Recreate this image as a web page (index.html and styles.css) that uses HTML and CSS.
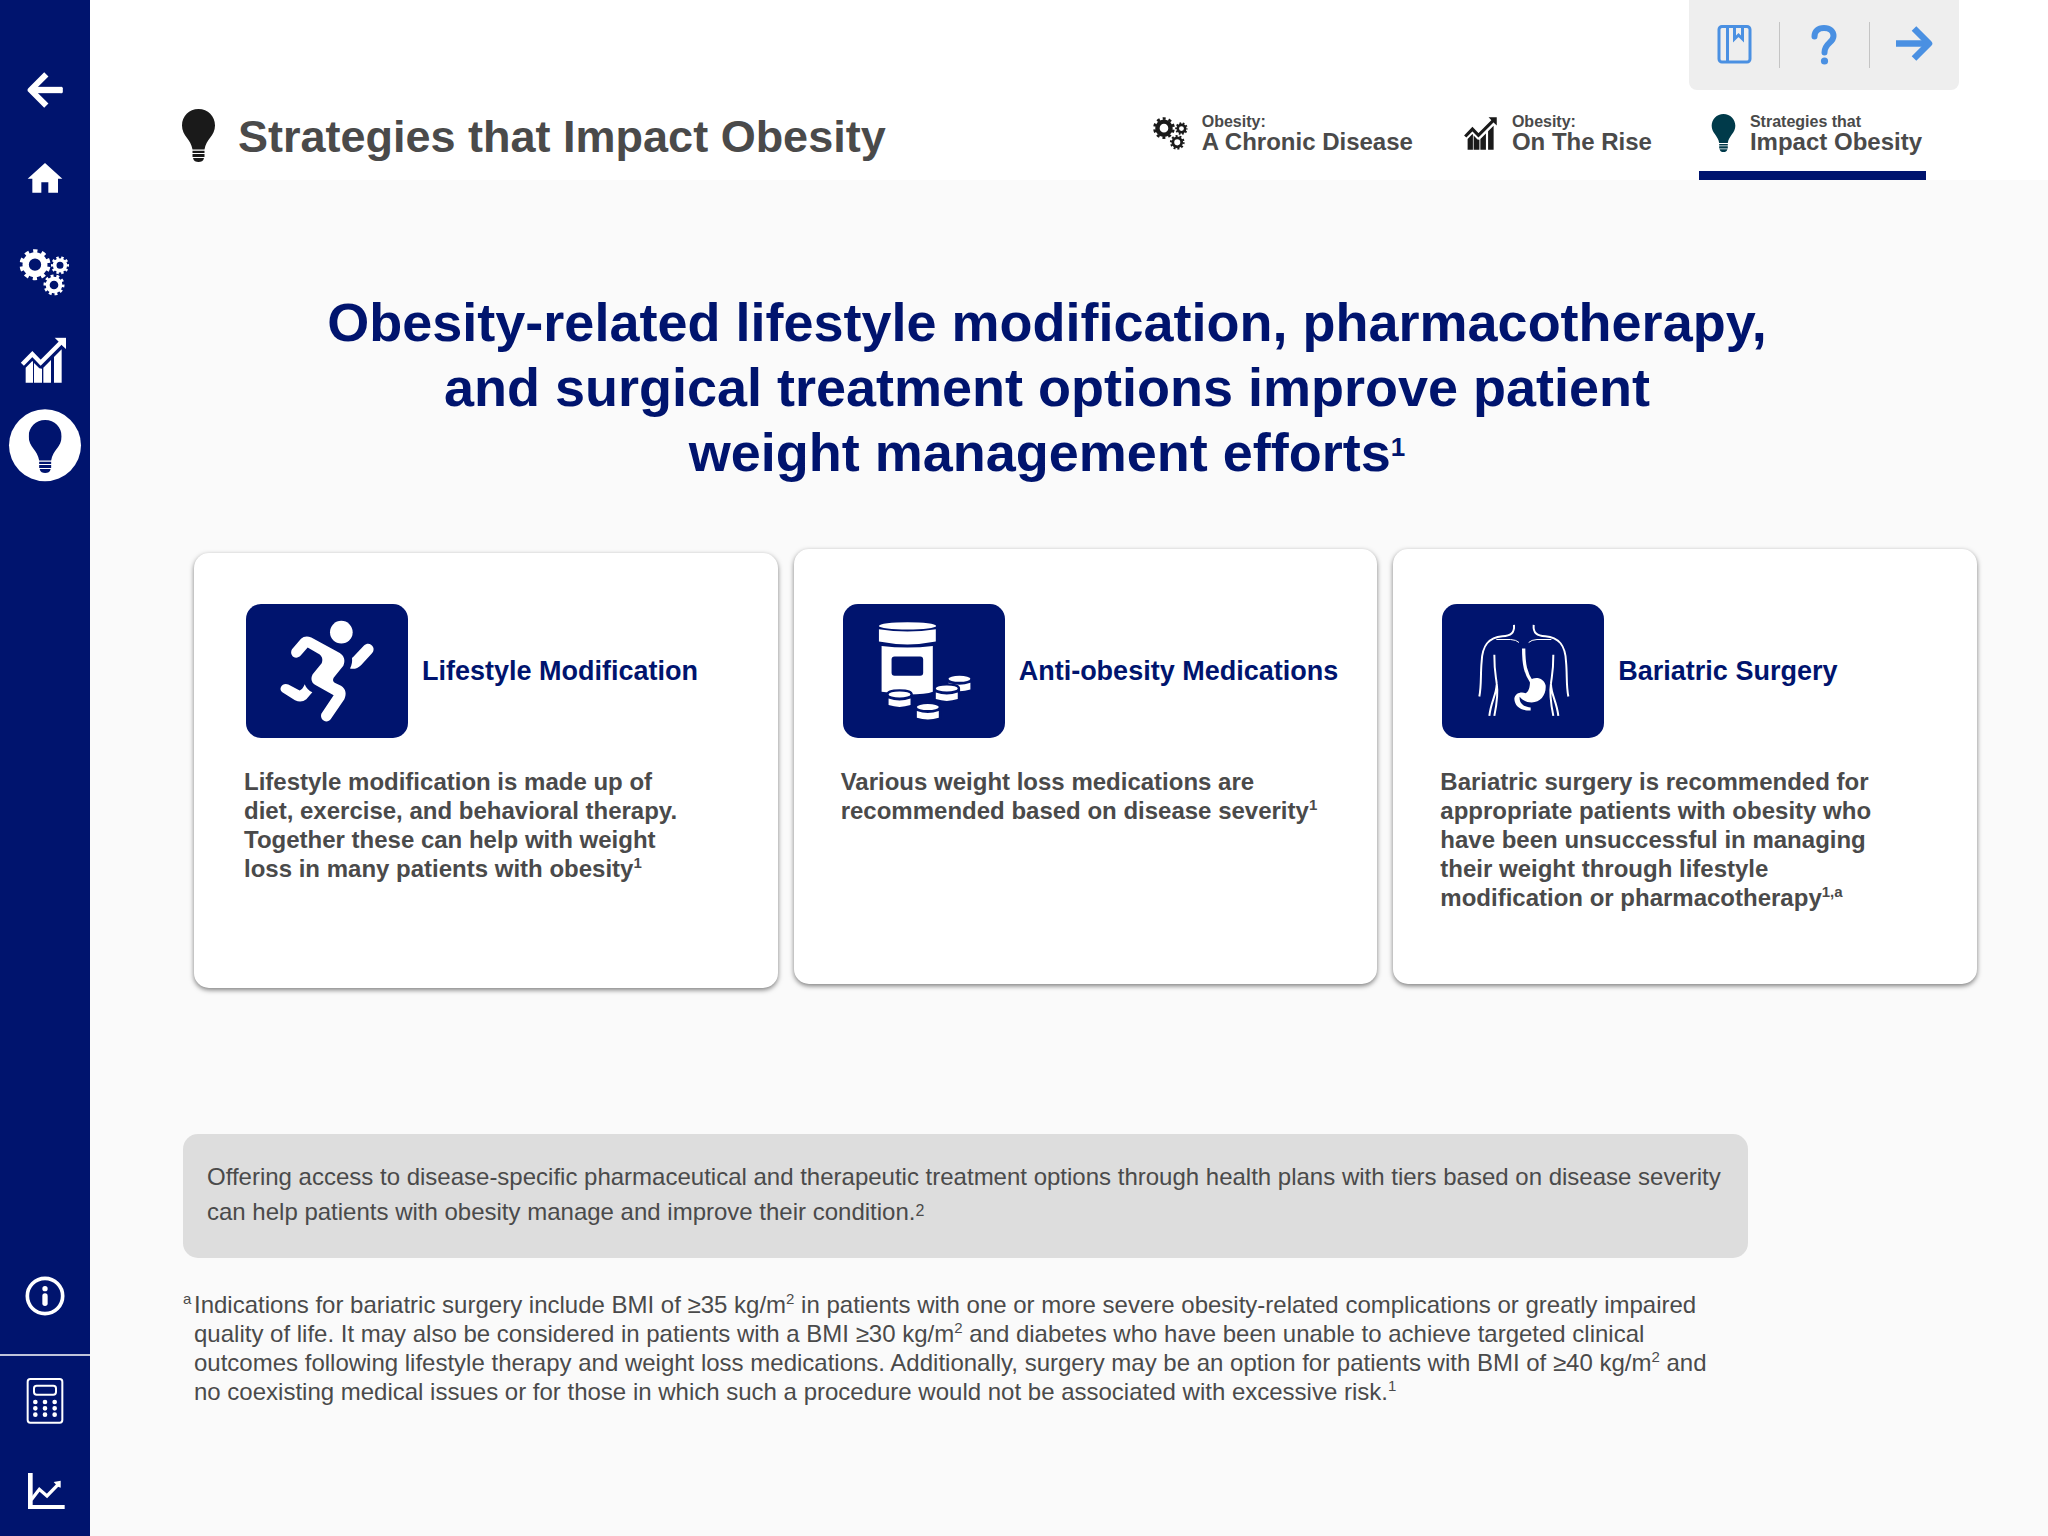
FILE: index.html
```html
<!DOCTYPE html>
<html lang="en">
<head>
<meta charset="utf-8">
<meta name="viewport" content="width=device-width, initial-scale=1">
<title>Strategies that Impact Obesity</title>
<link rel="stylesheet" href="styles.css">
</head>
<body>
<svg class="sprite" aria-hidden="true">
  <symbol id="gears" viewBox="58 627 150 140">
    <g fill="none" stroke="currentColor">
      <circle cx="105" cy="674" r="28" stroke-width="19"/>
      <circle cx="105" cy="674" r="41" stroke-width="11" pathLength="20" stroke-dasharray="1 1" stroke-dashoffset="-0.5"/>
      <circle cx="180" cy="676" r="16" stroke-width="11"/>
      <circle cx="180" cy="676" r="23" stroke-width="8" pathLength="20" stroke-dasharray="1 1" stroke-dashoffset="0.5"/>
      <circle cx="162" cy="735" r="19" stroke-width="12"/>
      <circle cx="162" cy="735" r="27" stroke-width="9" pathLength="20" stroke-dasharray="1 1" stroke-dashoffset="0.2"/>
    </g>
  </symbol>
  <symbol id="rise" viewBox="62 892 137 137">
    <path d="M67 973L97 942L122 968L184 906" fill="none" stroke="currentColor" stroke-width="13"/>
    <path d="M164 893H198V927L188 918L174 903Z" fill="currentColor"/>
    <path d="M77 983L97 963L99 965V1028H77ZM102 969L118 985L126 986V1028H102ZM130 983L153 960V1028H130ZM162 951L185 928V1028H162Z" fill="currentColor"/>
  </symbol>
  <symbol id="bulb" viewBox="0 0 33 53">
    <path d="M16.500 0C7 0 0 7.200 0 16.500C0 27 9 30 10.500 40.500H22.500C24 30 33 27 33 16.500C33 7.200 26 0 16.500 0ZM10.500 41.700H22.500V44H10.500ZM10.500 45H22.500V48H10.500ZM11 49H22C21.500 52 19 53 16.500 53C14 53 11.500 52 11 49Z" fill="currentColor"/>
  </symbol>
</svg>

<div class="app">
  <nav class="sidebar" aria-label="Main">
    <div class="sidebar-group">
      <a class="side-link" href="#back" aria-label="Back"><svg viewBox="0 15 270 267"><g fill="none" stroke="currentColor" stroke-linejoin="round"><path d="M139 103L92 150L139 197" stroke-width="18"/><path d="M92 150H184" stroke-width="19" stroke-linecap="butt"/><path d="M184 145V155" stroke-width="9" stroke-linecap="round"/></g></svg></a>
      <a class="side-link" href="#home" aria-label="Home"><svg viewBox="0 282 270 267"><path d="M135 369L187 416H174V458H145V427H124V458H97V416H83Z" fill="currentColor"/></svg></a>
      <a class="side-link" href="#disease" aria-label="A Chronic Disease"><svg viewBox="0 549 270 267"><use href="#gears" x="58" y="627" width="150" height="140"/></svg></a>
      <a class="side-link" href="#rise-page" aria-label="On The Rise"><svg viewBox="0 816 270 267"><use href="#rise" x="62" y="892" width="137" height="137"/></svg></a>
      <a class="side-link side-link-active" href="#strategies" aria-label="Strategies that Impact Obesity"><svg viewBox="0 1083 270 267"><circle cx="135" cy="1216" r="108" fill="#fff"/><use href="#bulb" x="86" y="1140" width="99" height="159"/></svg></a>
    </div>
    <div class="sidebar-group">
      <a class="side-link side-link-tall" href="#info" aria-label="Information"><svg viewBox="0 42 270 270"><g fill="none" stroke="currentColor"><circle cx="135" cy="138" r="53" stroke-width="11"/><path d="M135 138V160" stroke-width="16" stroke-linecap="round"/></g><circle cx="135" cy="116" r="8" fill="currentColor"/></svg></a>
      <div class="sidebar-tools">
        <a class="side-link side-link-tall" href="#calculator" aria-label="Calculator"><svg viewBox="0 318 270 270"><g fill="none" stroke="currentColor" stroke-width="6"><rect x="83" y="387" width="104" height="131" rx="8"/><rect x="102" y="407" width="66" height="27" rx="8"/></g><path d="M106 456h0M135 456h0M164 456h0M106 475h0M135 475h0M164 475h0M106 494h0M135 494h0M164 494h0" stroke="currentColor" stroke-width="14" stroke-linecap="round"/></svg></a>
        <a class="side-link side-link-tall" href="#chart" aria-label="Chart"><svg viewBox="0 588 270 270"><path d="M84 669H98V765H194V777H84Z" fill="currentColor"/><path d="M94 749L118 718L141 738L174 704" fill="none" stroke="currentColor" stroke-width="10"/><path d="M161 696L182 692V713L174 710Z" fill="currentColor"/></svg></a>
      </div>
    </div>
  </nav>

  <div class="page">
    <header class="header">
      <div class="tools">
        <button class="tool" type="button" aria-label="References"><svg viewBox="0 0 90 90"><g fill="none" stroke="currentColor" stroke-width="3"><rect x="30" y="26.500" width="31" height="35.500" rx="3"/><path d="M38.500 26V62M45.500 27V39L49.500 35L53.500 39V27"/></g></svg></button>
        <button class="tool" type="button" aria-label="Help"><svg viewBox="0 0 90 90"><path d="M35.500 36.500C35.500 31 39 28 45 28C51 28 54.500 31.500 54.500 36C54.500 43 45.500 43 45.500 52.500" fill="none" stroke="currentColor" stroke-width="6" stroke-linecap="round"/><circle cx="45.500" cy="61" r="3.600" fill="currentColor"/></svg></button>
        <button class="tool" type="button" aria-label="Next"><svg viewBox="0 0 90 90"><g fill="none" stroke="currentColor" stroke-width="6.500"><path d="M27 43.500H59"/><path d="M45 28.500L60 43.500L45 58.500" stroke-linejoin="round"/></g></svg></button>
      </div>
      <div class="title-row">
        <svg class="title-icon" aria-hidden="true"><use href="#bulb"/></svg>
        <h1 class="title">Strategies that Impact Obesity</h1>
        <nav class="tabs" aria-label="Sections">
          <a class="tab" href="#disease"><svg class="tab-icon" aria-hidden="true"><use href="#gears"/></svg><span class="tab-text"><span class="tab-small">Obesity:</span><span class="tab-large">A Chronic Disease</span></span></a>
          <a class="tab" href="#rise-page"><svg class="tab-icon" aria-hidden="true"><use href="#rise"/></svg><span class="tab-text"><span class="tab-small">Obesity:</span><span class="tab-large">On The Rise</span></span></a>
          <a class="tab tab-active" href="#strategies" aria-current="page"><svg class="tab-icon tab-icon-bulb" aria-hidden="true"><use href="#bulb"/></svg><span class="tab-text"><span class="tab-small">Strategies that</span><span class="tab-large">Impact Obesity</span></span></a>
        </nav>
      </div>
    </header>

    <main class="content">
      <h2 class="headline">Obesity-related lifestyle modification, pharmacotherapy,<br>and surgical treatment options improve patient<br>weight management efforts<sup>1</sup></h2>

      <div class="cards">
        <section class="card card-lowered">
          <div class="card-head">
            <svg class="tile" viewBox="33 28 486 401" aria-hidden="true">
              <g fill="currentColor">
                <circle cx="319" cy="112" r="34"/>
                <path d="M171 163L198 132Q210 121 229 128L313 174C328 183 332 197 325 213L296 249Q291 258 299 264L318 273C333 283 335 298 328 313L288 372C277 388 253 377 259 357L296 301L240 270C228 262 227 249 233 238L260 205C265 193 261 182 249 176L218 158L197 182C182 198 161 181 171 163Z"/>
                <path d="M160 269C144 261 128 281 142 292L180 316Q199 325 214 313L232 292Q216 285 209 268Q204 282 194 287Z"/>
                <path d="M353 188L387 152C403 136 426 158 411 175L378 211Q364 225 345 221Q353 207 351 189Z"/>
              </g>
            </svg>
            <h3 class="card-title">Lifestyle Modification</h3>
          </div>
          <p class="card-text">Lifestyle modification is made up of diet, exercise, and behavioral therapy. Together these can help with weight loss in many patients with obesity<sup>1</sup></p>
        </section>

        <section class="card">
          <div class="card-head">
            <svg class="tile" viewBox="34 28 487 401" aria-hidden="true">
              <defs>
                <g id="pill">
                  <path class="halo" d="M-34 0C-34 -13 34 -13 34 0V32Q0 44 -34 32Z"/>
                  <ellipse rx="33" ry="9" fill="currentColor"/>
                  <path d="M-33 12Q0 24 33 12V32Q0 43 -33 32Z" fill="currentColor"/>
                </g>
              </defs>
              <g fill="currentColor">
                <ellipse cx="228" cy="93" rx="86" ry="11"/>
                <path d="M142 103Q228 117 313 103V140Q228 157 142 140Z"/>
                <path d="M150 153Q228 163 304 153V291Q285 299 228 299L150 291Z"/>
              </g>
              <rect class="label" x="180" y="185" width="95" height="58" rx="9"/>
              <use href="#pill" x="384" y="252"/>
              <use href="#pill" x="346" y="281"/>
              <use href="#pill" x="204" y="299"/>
              <use href="#pill" x="289" y="337"/>
            </svg>
            <h3 class="card-title">Anti-obesity Medications</h3>
          </div>
          <p class="card-text card-text-wide">Various weight loss medications are recommended based on disease severity<sup>1</sup></p>
        </section>

        <section class="card">
          <div class="card-head">
            <svg class="tile" viewBox="39 28 486 401" aria-hidden="true">
              <g fill="none" stroke="currentColor" stroke-width="6">
                <path d="M255 90C257 115 245 123 220 124C180 127 160 150 158 200C154 240 158 270 151 305"/>
                <path d="M314 90C312 115 324 123 349 124C389 127 409 150 411 200C415 240 411 270 418 305"/>
                <path d="M196 180C196 230 200 240 203 265C207 290 205 320 196 363M203 270C202 300 186 320 181 363"/>
                <path d="M373 180C373 230 369 240 366 265C362 290 364 320 373 363M366 270C367 300 383 320 388 363"/>
                <path d="M202 134H245Q262 135 270 143M367 134H324Q307 135 299 143" stroke-width="3"/>
                <path d="M284 161C284 210 290 235 308 262" stroke-width="10"/>
              </g>
              <path d="M303 256C320 243 345 250 350 272C352 300 335 322 308 323C290 323 280 315 272 306C270 325 285 337 305 338V347C275 348 257 335 256 312C258 295 275 290 290 295C302 288 303 270 303 256Z" fill="currentColor"/>
            </svg>
            <h3 class="card-title">Bariatric Surgery</h3>
          </div>
          <p class="card-text">Bariatric surgery is recommended for appropriate patients with obesity who have been unsuccessful in managing their weight through lifestyle modification or pharmacotherapy<sup>1,a</sup></p>
        </section>
      </div>

      <p class="callout">Offering access to disease-specific pharmaceutical and therapeutic treatment options through health plans with tiers based on disease severity can help patients with obesity manage and improve their condition.<sup class="sup-low">2</sup></p>

      <div class="footnote">
        <span class="footnote-mark"><sup>a</sup></span>
        <p class="footnote-text">Indications for bariatric surgery include BMI of ≥35 kg/m<sup>2</sup> in patients with one or more severe obesity-related complications or greatly impaired quality of life. It may also be considered in patients with a BMI ≥30 kg/m<sup>2</sup> and diabetes who have been unable to achieve targeted clinical outcomes following lifestyle therapy and weight loss medications. Additionally, surgery may be an option for patients with BMI of ≥40 kg/m<sup>2</sup> and no coexisting medical issues or for those in which such a procedure would not be associated with excessive risk.<sup>1</sup></p>
      </div>
    </main>
  </div>
</div>
</body>
</html>
```
FILE: styles.css
```css
:root {
  --navy: #00146e;
  --ink: #4a4a4a;
  --blue: #4a90e2;
}

* {
  box-sizing: border-box;
}

body,
h1,
h2,
h3,
p {
  margin: 0;
}

body {
  background: #fafafa;
  color: var(--ink);
  font-family: "Liberation Sans", Arial, Helvetica, sans-serif;
  font-size: 24px;
  line-height: 29px;
}

a {
  color: inherit;
  text-decoration: none;
}

svg {
  display: block;
}

sup {
  font-size: 15px;
  line-height: 0;
  vertical-align: 9px;
}

.sprite {
  position: absolute;
  width: 0;
  height: 0;
}

.app {
  display: flex;
  min-height: 100vh;
}

/* Sidebar */
.sidebar {
  display: flex;
  flex: none;
  flex-direction: column;
  justify-content: space-between;
  width: 90px;
  padding-top: 45px;
  background: var(--navy);
  color: #fff;
}

.side-link {
  display: block;
  height: 89px;
}

.side-link-tall {
  height: 90px;
}

.side-link svg {
  width: 100%;
  height: 100%;
}

.side-link-active {
  color: var(--navy);
}

.sidebar-tools {
  border-top: 2px solid #bfc4da;
}

/* Header */
.page {
  flex: 1;
  min-width: 0;
}

.header {
  background: #fff;
}

.tools {
  display: flex;
  width: 270px;
  height: 90px;
  margin-left: auto;
  margin-right: 89px;
  border-radius: 0 0 8px 8px;
  background: #eee;
}

.tool {
  flex: 1;
  padding: 0;
  border: 0;
  background: none;
  color: var(--blue);
}

.tool + .tool {
  background: linear-gradient(#c4c4c4, #c4c4c4) 0 22px / 1px 46px no-repeat;
}

.tool svg {
  width: 90px;
  height: 90px;
}

.title-row {
  display: flex;
  align-items: center;
  height: 90px;
  padding: 0 122px 0 92px;
}

.title-icon {
  width: 33px;
  height: 53px;
  color: #1a1a1a;
}

.title {
  margin-left: 23px;
  padding-top: 3px;
  font-size: 45px;
  line-height: 54px;
}

.tabs {
  display: flex;
  gap: 34px;
  height: 90px;
  margin-left: auto;
}

.tab {
  display: flex;
  gap: 14px;
  padding: 22px 4px 0 12px;
  font-weight: bold;
}

.tab-active {
  margin-left: 9px;
  border-bottom: 9px solid var(--navy);
}

.tab-icon {
  width: 35px;
  height: 33px;
  margin-top: 5px;
  color: #1a1a1a;
}

.tab-icon-bulb {
  width: 25px;
  height: 38px;
  margin-top: 2px;
  color: #003a4a;
}

.tab-text {
  display: flex;
  flex-direction: column;
}

.tab-small {
  font-size: 16px;
  line-height: 20px;
}

.tab-large {
  line-height: 20px;
}

/* Content */
.content {
  padding: 110px 71px 0 93px;
}

.headline {
  padding-right: 66px;
  color: var(--navy);
  font-size: 54px;
  line-height: 65px;
  text-align: center;
}

.headline sup {
  font-size: 26px;
  vertical-align: 15px;
}

.cards {
  display: grid;
  grid-template-columns: repeat(3, 1fr);
  align-items: start;
  gap: 16px;
  margin: 64px 0 0 11px;
}

.card {
  min-height: 435px;
  padding: 55px 20px 55px 47px;
  border-radius: 15px;
  background: #fff;
  box-shadow: 0 2px 5px rgba(0, 0, 0, 0.5);
}

.card-lowered {
  margin-top: 4px;
  padding-top: 51px;
  padding-left: 50px;
}

.card-head {
  display: flex;
  align-items: center;
  gap: 14px;
  padding-left: 2px;
}

.tile {
  flex: none;
  width: 162px;
  height: 134px;
  border-radius: 15px;
  background: var(--navy);
  color: #fff;
}

.halo {
  fill: var(--navy);
  stroke: var(--navy);
  stroke-width: 12px;
}

.label {
  fill: var(--navy);
}

.card-title {
  color: var(--navy);
  font-size: 27px;
  line-height: 32px;
}

.card-text {
  max-width: 450px;
  margin-top: 29px;
  font-weight: bold;
}

.card-text-wide {
  max-width: 500px;
}

.callout {
  max-width: 1565px;
  margin-top: 146px;
  padding: 25px 12px 29px 24px;
  border-radius: 15px;
  background: #ddd;
  line-height: 35px;
}

.callout .sup-low {
  font-size: 16px;
  vertical-align: 4px;
}

.footnote {
  display: flex;
  max-width: 1538px;
  margin-top: 32px;
  padding-bottom: 60px;
}

.footnote-mark {
  flex: none;
  width: 11px;
}
```
